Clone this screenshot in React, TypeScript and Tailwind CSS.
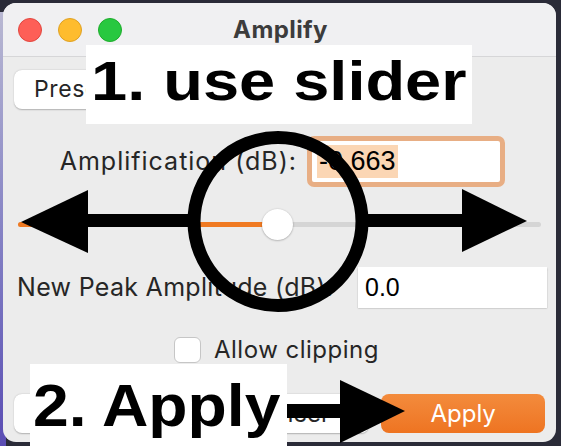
import React from 'react';

const ui = { fontFamily: 'Inter, "Noto Sans", sans-serif' };
const field = { fontFamily: '"Liberation Sans", Arial, sans-serif' };
const callout = { fontFamily: '"Liberation Sans", Arial, sans-serif' };

function TrafficLights() {
  return (
    <div className="flex items-center gap-[16px] pl-[15px]">
      <span className="w-[24px] h-[24px] rounded-full bg-[#fe5f57] border border-[#e2463f]" />
      <span className="w-[24px] h-[24px] rounded-full bg-[#febc2e] border border-[#dfa123]" />
      <span className="w-[24px] h-[24px] rounded-full bg-[#28c840] border border-[#1dad2b]" />
    </div>
  );
}

function Slider({ value }: { value: number }) {
  // value 0..1 along the track
  return (
    <div className="relative h-[31px] mx-[15px] flex items-center">
      <div className="w-full h-[5px] rounded-full bg-[#d5d5d5]" />
      <div
        className="absolute left-0 h-[5px] rounded-full bg-[#f07a22]"
        style={{ width: `${value * 100}%` }}
      />
      <div
        className="absolute w-[31px] h-[31px] -ml-[15.5px] rounded-full bg-white shadow-[0_0.5px_2px_rgba(0,0,0,0.35)]"
        style={{ left: `${value * 100}%` }}
      />
    </div>
  );
}

function Overlay() {
  return (
    <svg className="absolute inset-0 pointer-events-none" width="561" height="446" viewBox="0 0 561 446">
      <circle cx="278" cy="221.5" r="84" fill="none" stroke="#000" strokeWidth="13" />
      {/* left arrow */}
      <rect x="86" y="214" width="104" height="13" fill="#000" />
      <polygon points="21,222 88,190 88,253" fill="#000" />
      {/* right arrow */}
      <rect x="366" y="214" width="97" height="13" fill="#000" />
      <polygon points="462,189 462,252 527,221" fill="#000" />
      {/* bottom arrow */}
      <rect x="270" y="404" width="72" height="14" fill="#000" />
      <polygon points="340,380 340,443 405,411" fill="#000" />
    </svg>
  );
}

export default function App() {
  return (
    <div className="relative w-[561px] h-[446px] overflow-hidden bg-[#2a2b38]">
      <div className="absolute left-0 top-[12px] bottom-0 w-[6px] bg-gradient-to-b from-[#b9b8d2] to-[#5a4cb3]" />
      <div
        className="relative ml-[3px] mt-[3px] w-[553px] h-[439px] rounded-[13px] overflow-hidden bg-[#ececec] flex flex-col text-[#262626]"
        style={ui}
      >
        <div className="relative h-[54px] flex items-center bg-[#f0f0f2] border-b border-[#d6d6d8]">
          <TrafficLights />
          <div className="absolute inset-0 flex items-center justify-center pl-[2px] text-[24px] tracking-[0.4px] font-bold text-[#3c3c3c]">
            Amplify
          </div>
        </div>

        <div className="mt-[13px] ml-[11px] flex">
          <button className="h-[39px] w-[240px] px-[20px] text-left whitespace-nowrap rounded-[8px] bg-white text-[23px] tracking-[0.6px] shadow-[0_0.5px_1.5px_rgba(0,0,0,0.25)]">
            Presets &amp; settings
          </button>
        </div>

        <div className="mt-[27px] flex items-center">
          <div className="w-[294px] text-right text-[25px] tracking-[1px]">Amplification (dB):</div>
          <div className="ml-[10px] w-[198px] h-[51px] rounded-[7px] border-[5px] border-[#e8ae84] bg-white flex items-center">
            <span className="ml-[5px] px-[2px] h-[33px] flex items-center bg-[#fbd6b4] text-[27px] text-black" style={field}>
              -0.663
            </span>
          </div>
        </div>

        <div className="mt-[22px]">
          <Slider value={0.4955} />
        </div>

        <div className="mt-[27px] flex items-center">
          <div className="ml-[14px] w-[341px] text-[25px] tracking-[0.3px]">New Peak Amplitude (dB):</div>
          <div className="w-[189px] h-[41px] bg-white shadow-[0_0.5px_1.5px_rgba(0,0,0,0.3)] flex items-center pl-[7px] text-[25px] text-black" style={field}>
            0.0
          </div>
        </div>

        <div className="mt-[29px] h-[26px] flex items-center pl-[171px]">
          <span className="w-[27px] h-[26px] rounded-[6px] bg-white border border-[#c6c6c6]" />
          <span className="ml-[13px] text-[24px] leading-[26px] tracking-[0.5px]">Allow clipping</span>
        </div>

        <div className="mt-[31px] flex items-center px-[11px] gap-[12px] text-[24px]">
          <button className="h-[39px] w-[180px] rounded-[8px] bg-white shadow-[0_0.5px_1.5px_rgba(0,0,0,0.25)]">
            Preview
          </button>
          <button className="h-[39px] w-[164px] rounded-[8px] bg-white shadow-[0_0.5px_1.5px_rgba(0,0,0,0.25)]">
            Cancel
          </button>
          <button className="h-[39px] w-[164px] rounded-[8px] bg-gradient-to-b from-[#f38b3c] to-[#ee7421] text-white">
            Apply
          </button>
        </div>
      </div>

      <Overlay />

      <div className="absolute left-[86px] top-[45px] w-[386px] h-[79px] bg-white overflow-hidden">
        <div className="ml-[5px] mt-[4px] text-[56px] leading-[64px] font-bold text-black scale-x-[1.16] origin-left whitespace-nowrap" style={callout}>
          1. use slider
        </div>
      </div>
      <div className="absolute left-[30px] top-[364px] w-[257px] h-[82px] bg-white overflow-hidden">
        <div className="ml-[3px] mt-[8px] text-[60px] leading-[68px] font-bold text-black scale-x-[1.07] origin-left whitespace-nowrap" style={callout}>
          2. Apply
        </div>
      </div>
    </div>
  );
}
